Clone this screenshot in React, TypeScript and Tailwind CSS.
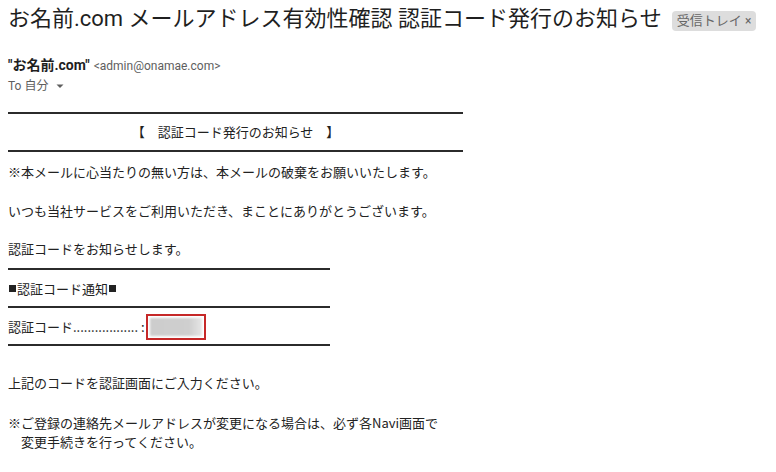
import React from 'react';

const jp = { fontFamily: 'Roboto, "Noto Sans CJK JP", sans-serif' };
const body = { fontFamily: '"Noto Sans CJK JP", "Noto Sans", sans-serif' };

const Rule: React.FC<{ wide?: boolean; className?: string }> = ({ wide, className }) => (
  <div className={`h-[2px] bg-[#2b2b2b] ${wide ? 'w-[455px]' : 'w-[322px]'} ${className ?? ''}`} />
);

const App: React.FC = () => {
  return (
    <div className="w-[776px] h-[472px] bg-white overflow-hidden pl-2 text-[#222]" style={jp}>
      {/* subject */}
      <div className="flex items-center pt-[5px] h-[33px]">
        <h1 className="text-[22px] leading-[28px] text-[#1f1f1f] whitespace-nowrap">
          お名前.com メールアドレス有効性確認 認証コード発行のお知らせ
        </h1>
        <span className="ml-[10px] mt-[3px] bg-[#dddddd] text-[#666] text-[13px] leading-[19px] px-[5px] rounded-[4px] whitespace-nowrap">
          受信トレイ <span className="text-[12px]">×</span>
        </span>
      </div>

      {/* sender */}
      <div className="mt-[22px] flex items-baseline gap-1 leading-[20px]">
        <span className="text-[14px] font-bold text-[#1f1f1f]">"お名前.com"</span>
        <span className="text-[12px] text-[#5e5e5e]">&lt;admin@onamae.com&gt;</span>
      </div>
      <div className="flex items-center gap-1 text-[12px] leading-[18px] text-[#5e5e5e] mt-[1px]">
        <span>To 自分</span>
        <svg width="12" height="12" viewBox="0 0 12 12" className="ml-[2px]">
          <path d="M2.5 4.5 L9.5 4.5 L6 8 Z" fill="#5e5e5e" />
        </svg>
      </div>

      {/* message body */}
      <div className="text-[13px] leading-[19px] text-[#222]" style={body}>
        <Rule wide className="mt-[17px]" />
        <div className="w-[455px] text-center mt-[8px] whitespace-pre">【　認証コード発行のお知らせ　】</div>
        <Rule wide className="mt-[9px]" />
        <div className="mt-[10px]">※本メールに心当たりの無い方は、本メールの破棄をお願いいたします。</div>
        <div className="mt-[20px]">いつも当社サービスをご利用いただき、まことにありがとうございます。</div>
        <div className="mt-[19px]">認証コードをお知らせします。</div>
        <Rule className="mt-[10px]" />
        <div className="mt-[9px] flex items-center">
          <span className="inline-block w-[7px] h-[7px] bg-[#222] mx-[1px]" />
          <span>認証コード通知</span>
          <span className="inline-block w-[7px] h-[7px] bg-[#222] mx-[1px]" />
        </div>
        <Rule className="mt-[8px]" />
        <div className="mt-[9px] h-[19px] flex items-center">
          <span>認証コード..................</span>
          <span className="ml-[3px]">:</span>
          <div className="ml-[1px] shrink-0 w-[60px] h-[26px] border-2 border-[#c62828] p-[2px] flex items-center">
            <div className="w-[52px] h-[18px] bg-gradient-to-r from-[#cdcdcd] via-[#cfcfcf] via-75% to-[#e6e6e6] blur-[1px]" />
          </div>
        </div>
        <Rule className="mt-[8px]" />
        <div className="mt-[27px]">上記のコードを認証画面にご入力ください。</div>
        <div className="mt-[21px]">※ご登録の連絡先メールアドレスが変更になる場合は、必ず各Navi画面で</div>
        <div className="pl-[13px]">変更手続きを行ってください。</div>
      </div>
    </div>
  );
};

export default App;
